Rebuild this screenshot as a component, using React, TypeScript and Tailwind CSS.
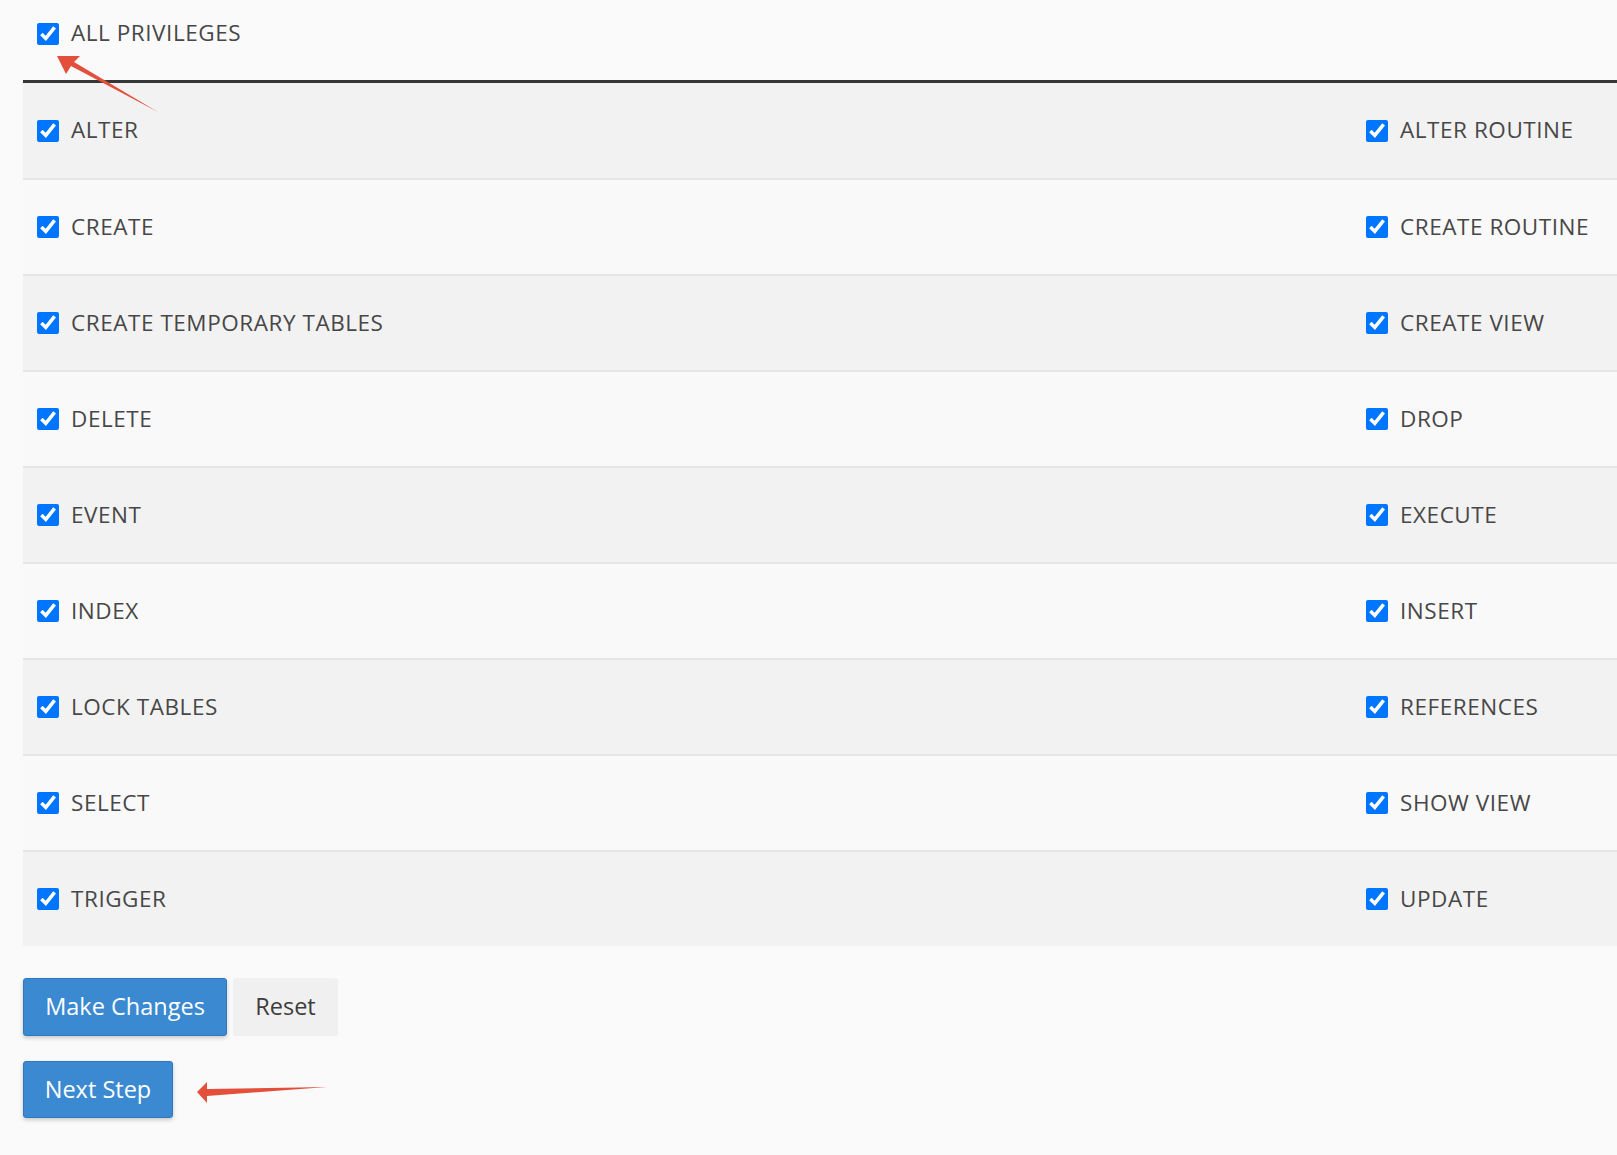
import React from 'react';

const rows: [string, string][] = [
  ['ALTER', 'ALTER ROUTINE'],
  ['CREATE', 'CREATE ROUTINE'],
  ['CREATE TEMPORARY TABLES', 'CREATE VIEW'],
  ['DELETE', 'DROP'],
  ['EVENT', 'EXECUTE'],
  ['INDEX', 'INSERT'],
  ['LOCK TABLES', 'REFERENCES'],
  ['SELECT', 'SHOW VIEW'],
  ['TRIGGER', 'UPDATE'],
];

function Check({ label }: { label: string }) {
  return (
    <label className="flex items-center gap-[12px] text-[22.5px] tracking-[0.55px] text-[#474747] leading-none">
      <input
        type="checkbox"
        defaultChecked
        className="w-[22px] h-[22px] m-0 accent-[#0075ff]"
      />
      <span>{label}</span>
    </label>
  );
}

export default function App() {
  return (
    <div
      className="relative min-h-[1155px] bg-[#fafafa] pl-[23px]"
      style={{ fontFamily: '"Open Sans", "Noto Sans", sans-serif' }}
    >
      {/* All privileges */}
      <div className="h-[80px] flex items-center pl-[14px] pb-[13px]">
        <Check label="ALL PRIVILEGES" />
      </div>

      {/* Privileges table */}
      <div className="border-t-[3px] border-[#363636]">
        {rows.map(([left, right], i) => (
          <div
            key={left}
            className={`flex items-center ${i === 0 ? 'h-[95px]' : 'h-[96px] border-t-2 border-[#e6e6e6]'} ${
              i % 2 === 0 ? 'bg-[#f2f2f2]' : 'bg-[#f9f9f9]'
            }`}
          >
            <div className="flex-1 pl-[14px]">
              <Check label={left} />
            </div>
            <div className="w-[265px] pl-[14px]">
              <Check label={right} />
            </div>
          </div>
        ))}
      </div>

      {/* Actions */}
      <div className="flex gap-[6px] mt-[32px]">
        <button className="h-[58px] w-[204px] rounded-[3px] bg-[#3a89d1] border border-[#2f78bc] text-white text-[23.5px] shadow-[0_2px_4px_rgba(0,0,0,0.2)]">
          Make Changes
        </button>
        <button className="h-[58px] w-[105px] rounded-[3px] bg-[#f0f0f0] text-[#3d3d3d] text-[23.5px]">
          Reset
        </button>
      </div>
      <div className="mt-[25px]">
        <button className="h-[57px] w-[150px] rounded-[3px] bg-[#3a89d1] border border-[#2f78bc] text-white text-[23.5px] shadow-[0_2px_4px_rgba(0,0,0,0.2)]">
          Next Step
        </button>
      </div>

      {/* Annotation arrows */}
      <svg
        className="absolute left-0 top-0 pointer-events-none"
        width="400"
        height="1155"
        viewBox="0 0 400 1155"
      >
        <polygon
          points="57,56 80,56 74,62 158,112 71,66 66,74"
          fill="#e34f3a"
        />
        <polygon
          points="197,1092 207,1082 207,1089 327,1087 207,1096 207,1103"
          fill="#e34f3a"
        />
      </svg>
    </div>
  );
}
